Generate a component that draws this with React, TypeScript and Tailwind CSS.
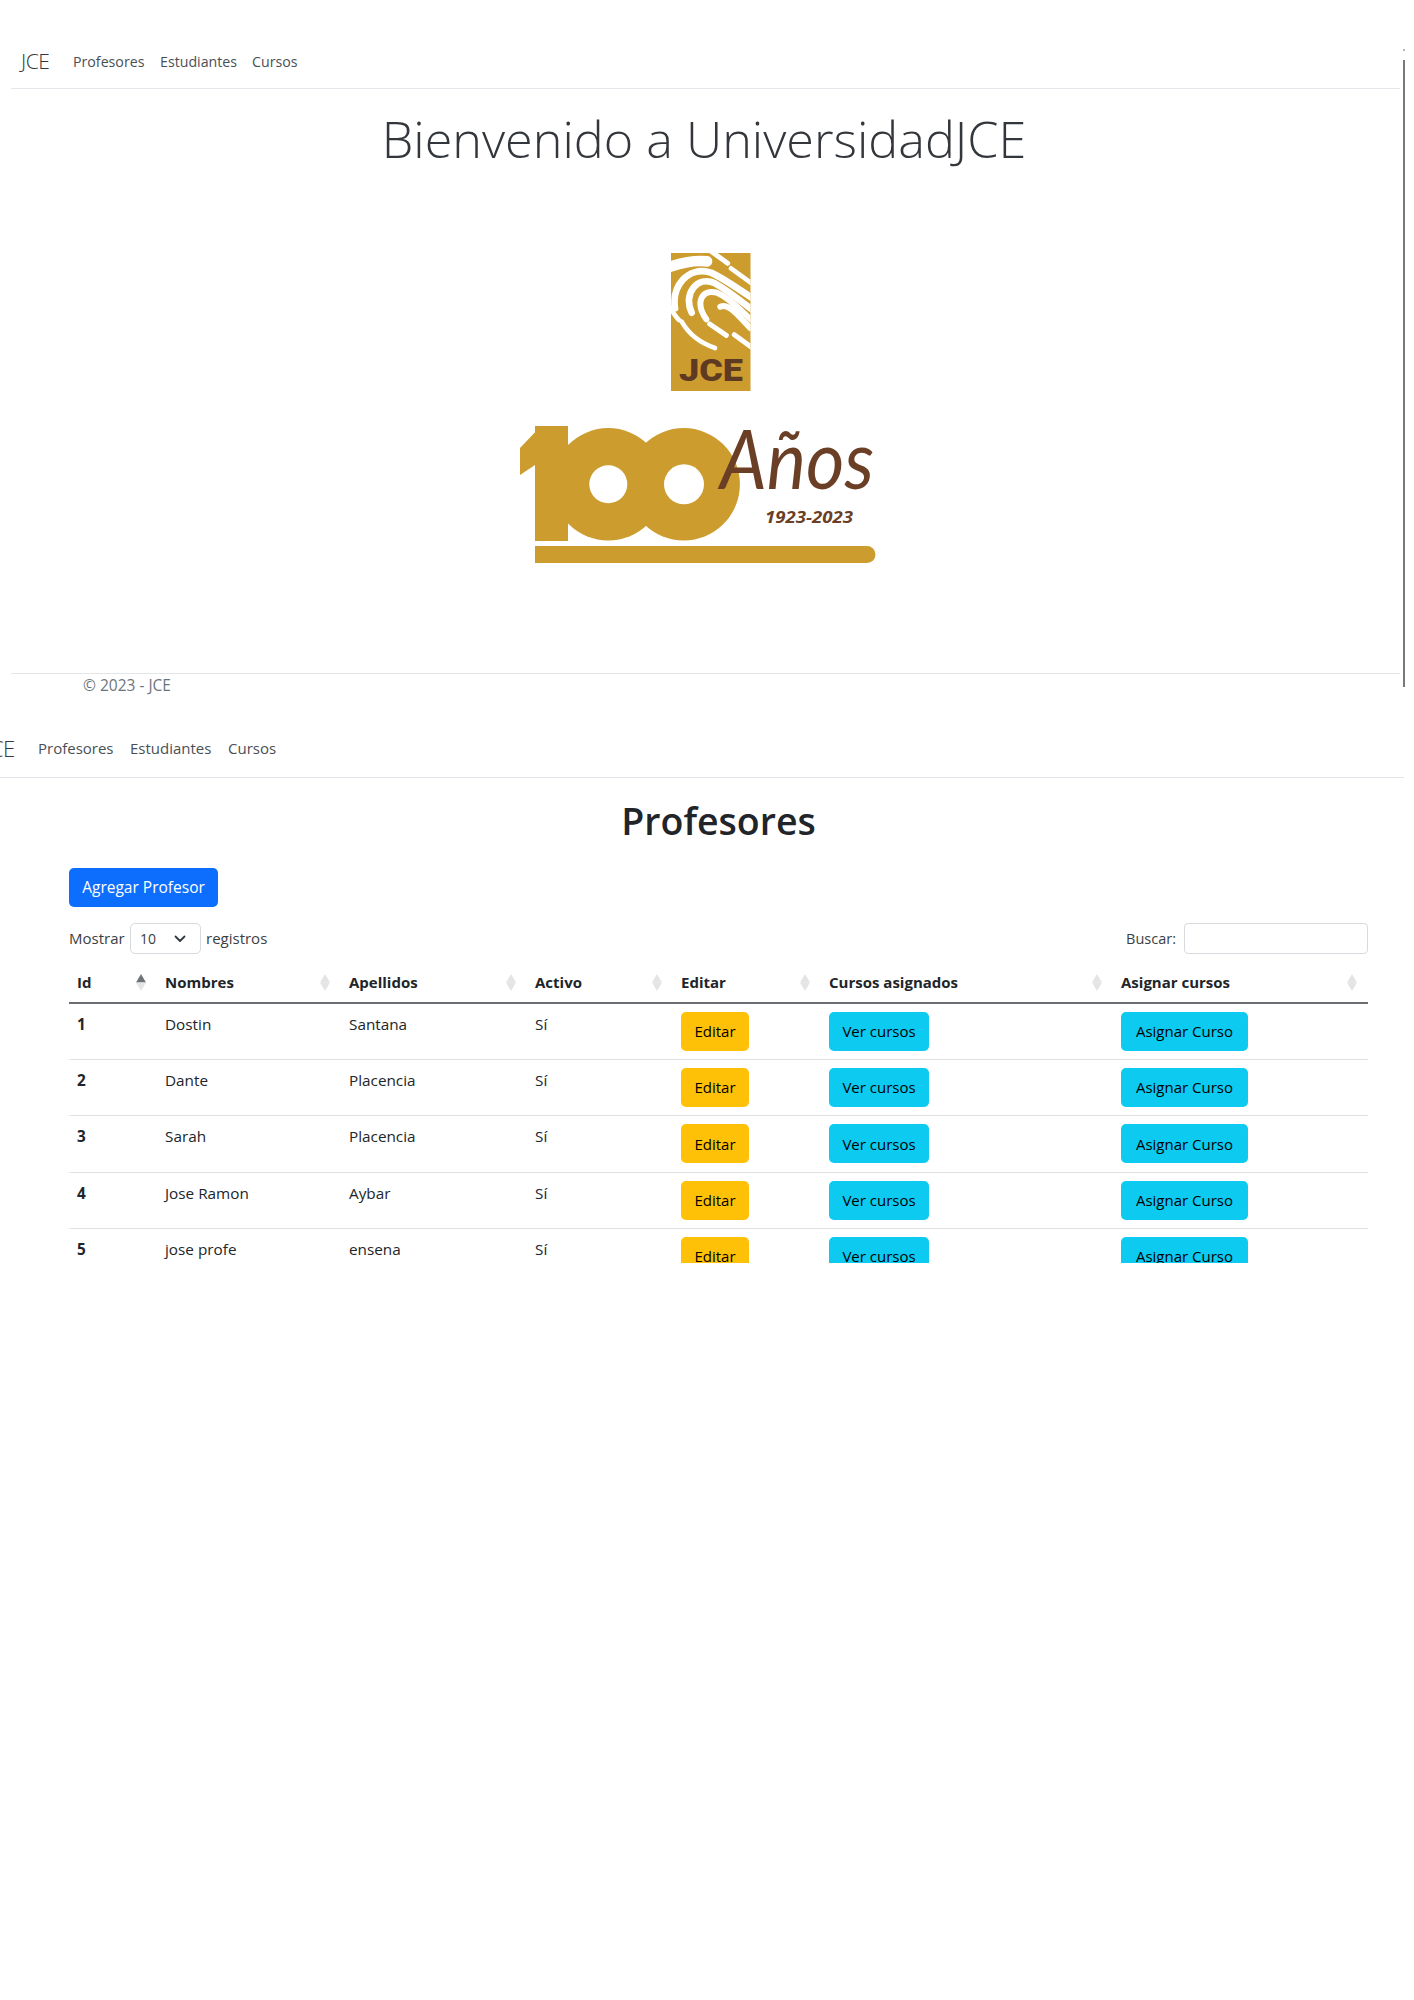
import React from "react";

const Diamond = ({ up = false }: { up?: boolean }) => (
  <svg width="10" height="17" viewBox="0 0 10 17" className="absolute right-[11px] top-[10px]">
    <path d="M5 0 L10 8.5 H0 Z" fill={up ? "#6f7377" : "#e4e4e4"} />
    <path d="M5 17 L10 8.5 H0 Z" fill="#e4e4e4" />
  </svg>
);

const Logo = () => (
  <svg width="420" height="360" viewBox="0 0 420 360" className="block">
    <defs>
      <clipPath id="fp">
        <rect x="170" y="23" width="79.5" height="138" />
      </clipPath>
    </defs>
    <rect x="170" y="23" width="79.5" height="138" fill="#cd9c2e" />
    <g clipPath="url(#fp)">
      <g transform="translate(150 10) scale(0.3333)" fill="none" stroke="#fff" strokeLinecap="round">
        <path d="M45 84 C 90 68, 130 60, 168 64" strokeWidth="32" />
        <path d="M178 32 L 230 70" strokeWidth="15" />
        <path d="M240 85 L 310 136" strokeWidth="14" />
        <path d="M72 205 C 62 140, 110 76, 180 98 C 220 116, 260 146, 310 178" strokeWidth="20" />
        <path d="M122 218 C 95 160, 140 106, 192 130 C 232 152, 265 180, 310 214" strokeWidth="20" />
        <path d="M166 238 C 132 190, 150 146, 198 158 C 238 174, 268 212, 310 248" strokeWidth="18" />
        <path d="M208 200 C 235 188, 265 232, 298 264" strokeWidth="18" />
        <path d="M176 252 L 226 286" strokeWidth="15" />
        <path d="M250 284 L 310 328" strokeWidth="15" />
        <path d="M54 196 C 68 222, 76 232, 84 240" strokeWidth="14" />
        <path d="M92 245 C 115 285, 150 310, 192 324" strokeWidth="14" />
      </g>
    </g>
    <text x="178" y="151" fontFamily="Roboto, sans-serif" fontSize="32" fontWeight="900" fill="#5f3a22" textLength="64" lengthAdjust="spacingAndGlyphs">JCE</text>

    <rect x="34" y="196" width="33" height="115" fill="#cd9c2e" />
    <polygon points="40,196 67,196 67,240 34,235 19,245 19,218" fill="#cd9c2e" />
    <circle cx="107.3" cy="254.3" r="56.2" fill="#cd9c2e" />
    <circle cx="182.7" cy="254.3" r="56.2" fill="#cd9c2e" />
    <circle cx="107.3" cy="254.3" r="19" fill="#fff" />
    <circle cx="183" cy="254.3" r="20" fill="#fff" />
    <path d="M34 316 H366 A8.5 8.5 0 0 1 366 333 H34 Z" fill="#cd9c2e" />
    <text x="219" y="259" fontFamily="Lato, sans-serif" fontStyle="italic" fontSize="82" fill="#6b3f26" textLength="154" lengthAdjust="spacingAndGlyphs">Años</text>
    <text x="264" y="293" fontFamily="'Open Sans', sans-serif" fontStyle="italic" fontWeight="700" fontSize="16.5" fill="#6b3f26" textLength="88" lengthAdjust="spacingAndGlyphs">1923-2023</text>
  </svg>
);

const rows = [
  ["1", "Dostin", "Santana"],
  ["2", "Dante", "Placencia"],
  ["3", "Sarah", "Placencia"],
  ["4", "Jose Ramon", "Aybar"],
  ["5", "jose profe", "ensena"],
];

const heads = ["Id", "Nombres", "Apellidos", "Activo", "Editar", "Cursos asignados", "Asignar cursos"];

export default function App() {
  return (
    <div className="relative w-[1414px] min-h-[2000px] bg-white overflow-hidden text-[#212529]" style={{ fontFamily: "'Open Sans', 'Noto Sans', sans-serif" }}>
      <div className="absolute left-[1403px] top-[60px] h-[627px] w-[1.5px] bg-[#77797b]" />
      <div className="absolute left-[1403px] top-[49px] h-[2px] w-[1.5px] bg-[#b5b5b5]" />

      <div className="ml-[11px] w-[1389px]">
        <nav className="flex items-center h-[89px] pt-[45px] pb-[9px] border-b border-[#e3e6ea] text-[14.2px] text-[#4a4f55]">
          <span className="ml-[10px] w-[52px] text-[21px] font-light text-[#33373b] tracking-[-0.5px]">JCE</span>
          <span className="w-[87px]">Profesores</span>
          <span className="w-[92px]">Estudiantes</span>
          <span>Cursos</span>
        </nav>
        <h1 className="flex h-[100px] items-center justify-center text-[50.3px] font-light text-[#33373b] pr-[3px]">Bienvenido a UniversidadJCE</h1>
        <div className="mt-[41px] ml-[490px]">
          <Logo />
        </div>
        <footer className="mt-[83px] h-[25px] border-t border-[#e3e6e8] pl-[72px] text-[15.5px] leading-[22px] text-[#6c757d]">© 2023 - JCE</footer>
      </div>

      <nav className="mt-[33px] flex h-[47px] w-[1404px] items-start border-b border-[#e1e4e8] text-[15px] text-[#4a4f55]">
        <div className="flex h-[34px] items-center">
          <span className="-ml-[15px] w-[53px] text-[22px] font-light text-[#33373b] tracking-[-0.5px]">JCE</span>
          <span className="w-[92px]">Profesores</span>
          <span className="w-[98px]">Estudiantes</span>
          <span>Cursos</span>
        </div>
      </nav>

      <main className="ml-[69px] w-[1299px]">
        <h2 className="flex h-[86px] items-center justify-center text-[37.5px] font-semibold text-[#212529]">Profesores</h2>
        <button className="mt-[4px] flex h-[39px] w-[149px] items-center justify-center rounded-[5px] bg-[#0d6efd] text-[15.5px] text-white">Agregar Profesor</button>

        <div className="mt-[16px] flex h-[31px] items-center text-[15px] text-[#3a3f44]">
          <span className="w-[61px]">Mostrar</span>
          <div className="flex h-[31px] w-[71px] items-center justify-between rounded-[5px] border border-[#d6dade] pl-[9px] pr-[14px] text-[14px]">
            <span>10</span>
            <svg width="12" height="8" viewBox="0 0 12 8" fill="none" stroke="#343a40" strokeWidth="1.8" strokeLinecap="round" strokeLinejoin="round">
              <path d="M1.5 1.5 L6 6 L10.5 1.5" />
            </svg>
          </div>
          <span className="ml-[5px]">registros</span>
          <span className="ml-auto mr-[8px] text-[14.5px]">Buscar:</span>
          <div className="h-[31px] w-[184px] rounded-[4px] border border-[#d6dade]" />
        </div>

        <div className="mt-[10px] h-[299px] overflow-hidden">
          <table className="w-[1299px] table-fixed border-collapse text-[15.3px]">
            <colgroup>
              <col className="w-[88px]" />
              <col className="w-[184px]" />
              <col className="w-[186px]" />
              <col className="w-[146px]" />
              <col className="w-[148px]" />
              <col className="w-[292px]" />
              <col className="w-[255px]" />
            </colgroup>
            <thead>
              <tr className="h-[39px] border-b-2 border-[#6b6e72]">
                {heads.map((h, i) => (
                  <th key={h} className="relative pl-[8px] pb-[1px] text-left text-[15px] font-bold">
                    {h}
                    <Diamond up={i === 0} />
                  </th>
                ))}
              </tr>
            </thead>
            <tbody>
              {rows.map((r) => (
                <tr key={r[0]} className="h-[56.4px] border-b border-[#dee2e6] align-top">
                  <td className="pl-[8px] pt-[9px] font-bold">{r[0]}</td>
                  <td className="pl-[8px] pt-[9px]">{r[1]}</td>
                  <td className="pl-[8px] pt-[9px]">{r[2]}</td>
                  <td className="pl-[8px] pt-[9px]">Sí</td>
                  <td className="pl-[8px] pt-[8px]">
                    <button className="flex h-[39px] w-[68px] items-center justify-center rounded-[5px] bg-[#ffc107] text-[15px] text-black">Editar</button>
                  </td>
                  <td className="pl-[8px] pt-[8px]">
                    <button className="flex h-[39px] w-[100px] items-center justify-center rounded-[5px] bg-[#0dcaf0] text-[15px] text-black">Ver cursos</button>
                  </td>
                  <td className="pl-[8px] pt-[8px]">
                    <button className="flex h-[39px] w-[127px] items-center justify-center rounded-[5px] bg-[#0dcaf0] text-[15px] text-black">Asignar Curso</button>
                  </td>
                </tr>
              ))}
            </tbody>
          </table>
        </div>
      </main>
    </div>
  );
}
